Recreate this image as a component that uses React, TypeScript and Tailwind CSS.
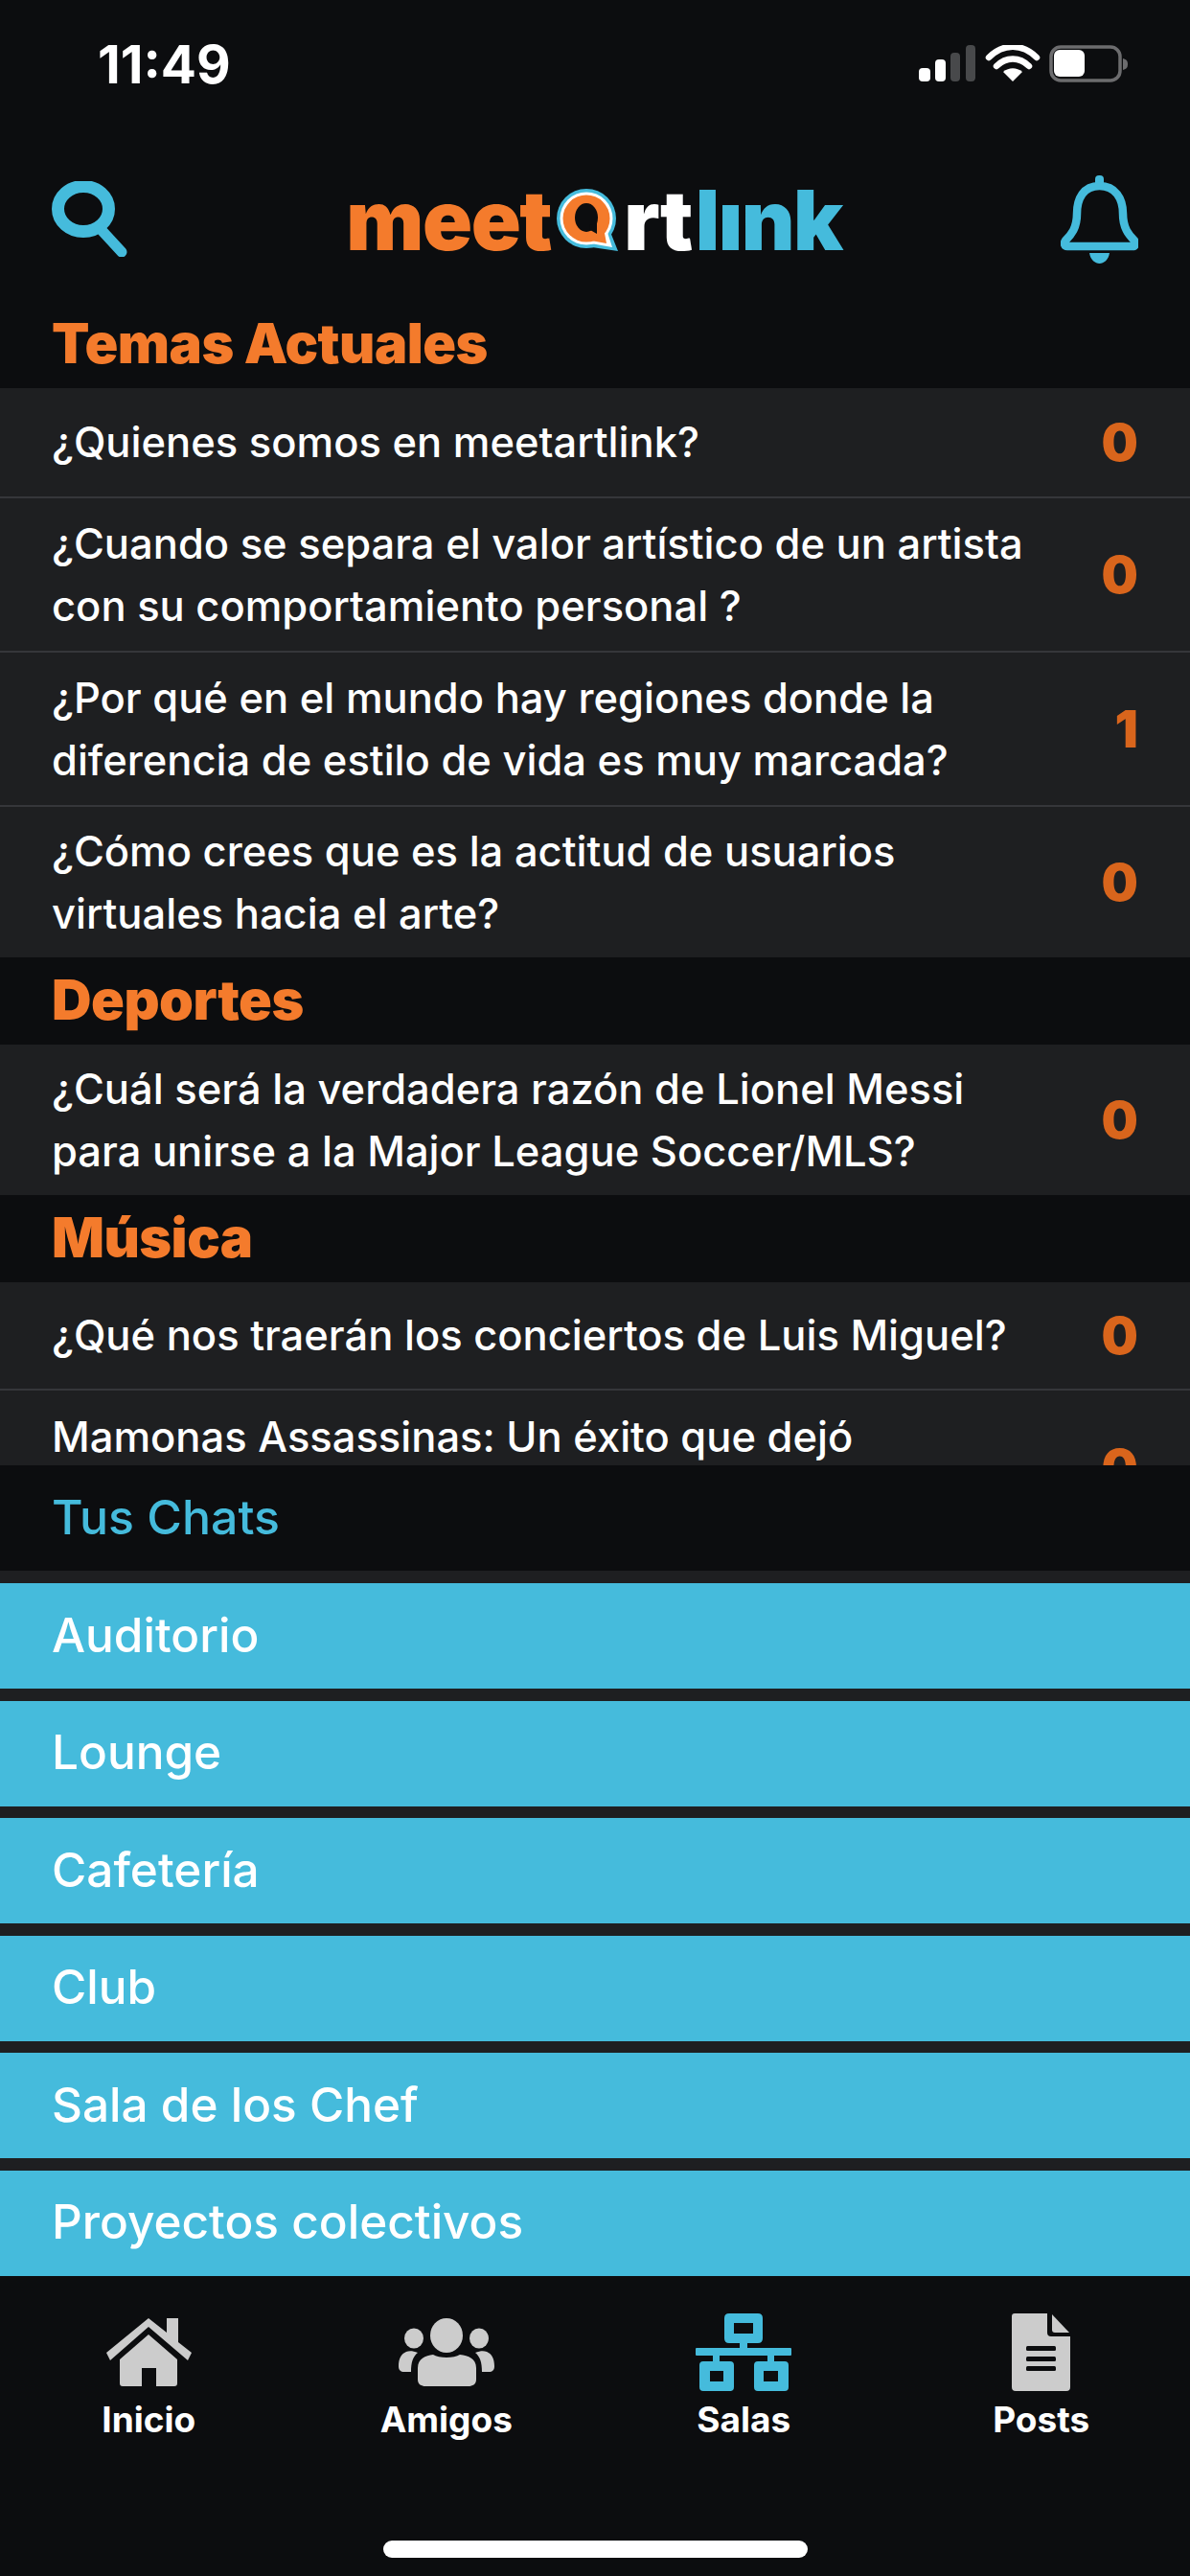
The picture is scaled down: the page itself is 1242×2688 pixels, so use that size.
import React from 'react'

const temas = [
  { lines: ['¿Quienes somos en meetartlink?'], count: 0, height: 'h-[115px]' },
  { lines: ['¿Cuando se separa el valor artístico de un artista', 'con su comportamiento personal ?'], count: 0, height: 'h-[161px]' },
  { lines: ['¿Por qué en el mundo hay regiones donde la', 'diferencia de estilo de vida es muy marcada?'], count: 1, height: 'h-[161px]' },
  { lines: ['¿Cómo crees que es la actitud de usuarios', 'virtuales hacia el arte?'], count: 0, height: 'h-[157px]', last: true },
]
const deportes = [
  { lines: ['¿Cuál será la verdadera razón de Lionel Messi', 'para unirse a la Major League Soccer/MLS?'], count: 0, height: 'h-[157px]', last: true },
]
const chats = ['Auditorio', 'Lounge', 'Cafetería', 'Club', 'Sala de los Chef', 'Proyectos colectivos']

function StatusIcons() {
  return (
    <svg width="218" height="39" viewBox="0 0 218 39">
      <rect x="0" y="24" width="12" height="14" rx="4" fill="#fff" />
      <rect x="17" y="15" width="11" height="23" rx="4" fill="#fff" />
      <rect x="33" y="8" width="10" height="30" rx="4" fill="#48494b" />
      <rect x="49" y="0" width="10" height="38" rx="4" fill="#48494b" />
      <path d="M73 13 C88 -2 108 -2 123 13 M81 22 C91 12 105 12 115 22" fill="none" stroke="#fff" strokeWidth="6.5" strokeLinecap="round" />
      <path d="M88 28 C94 23 102 23 108 28 L98 38 Z" fill="#fff" />
      <rect x="138" y="2" width="72" height="35" rx="10" fill="none" stroke="#6c6c6e" strokeWidth="3.5" />
      <rect x="141" y="5" width="32" height="28" rx="6" fill="#fff" />
      <path d="M213 14 C217 15 218 17 218 20 C218 23 217 25 213 26 Z" fill="#6c6c6e" />
    </svg>
  )
}

function SearchIcon() {
  return (
    <svg width="79" height="79" viewBox="0 0 79 79" fill="none">
      <ellipse cx="33" cy="29" rx="26.500" ry="23.500" stroke="#45bbdc" strokeWidth="13" />
      <path d="M50 49 L73 74" stroke="#45bbdc" strokeWidth="11" strokeLinecap="round" />
    </svg>
  )
}

function BellIcon() {
  return (
    <svg width="81" height="92" viewBox="0 0 81 92" fill="none">
      <rect x="36" y="0" width="9" height="14" rx="4" fill="#45bbdc" />
      <path d="M40.500 11 C24 11 17 24 17 40 C17 55 11 62 5 68 C3 71 4 74 7 74 H75 C78 74 79 71 77 68 C71 62 65 55 65 40 C65 24 57 11 40.500 11 Z" stroke="#45bbdc" strokeWidth="8.500" strokeLinejoin="round" />
      <path d="M30 81 H51 C50 88 45 92 40.500 92 C36 92 31 88 30 81 Z" fill="#45bbdc" />
    </svg>
  )
}

function LogoBubble() {
  const layer = (r: number, color: string, tail: string) => (
    <g fill={color}>
      <circle cx="31" cy="31" r={r} />
      <polygon points={tail} />
    </g>
  )
  return (
    <svg width="64" height="66" viewBox="0 0 64 66" className="mx-[6px] shrink-0">
      {layer(31, '#45bbdc', '36,40 50,30 64,65 30,60')}
      {layer(27.500, '#ffffff', '36,40 48,30 58,61 30,56')}
      {layer(24.500, '#f47b2c', '36,40 47,30 52,57 30,53')}
      <ellipse cx="31" cy="30" rx="12" ry="15" fill="#0c0d0f" />
      <polygon points="34,38 42,36 42,47 35,43" fill="#0c0d0f" />
    </svg>
  )
}

function Logo() {
  return (
    <div className="flex items-end h-[66px] font-['Inter',sans-serif] font-black text-[86px] leading-[66px] tracking-[-1.5px]">
      <span className="text-[#f47b2c]">meet</span>
      <LogoBubble />
      <span className="text-white">rt</span>
      <span className="text-[#45bbdc] ml-[4px]">lınk</span>
    </div>
  )
}

function HomeIcon() {
  return (
    <svg width="89" height="71" viewBox="0 0 89 71" fill="#cccccc">
      <polygon points="0,36 44,0 63,15 63,0 75,0 75,25 89,36 85,44 44,9 4,44" />
      <path d="M44 17 L74 43 V68 Q74 71 71 71 H52 V52 H37 V71 H17 Q14 71 14 68 V43 Z" />
    </svg>
  )
}

function FriendsIcon() {
  return (
    <svg width="100" height="71" viewBox="0 0 100 71" fill="#cccccc">
      <ellipse cx="50" cy="18" rx="17" ry="18" />
      <ellipse cx="16" cy="21" rx="10" ry="10.500" />
      <ellipse cx="84" cy="21" rx="10" ry="10.500" />
      <path d="M20 52 C20 42 28 39 36 38 C42 42 58 42 64 38 C73 39 81 42 81 52 V64 C81 69 77 71 73 71 H28 C24 71 20 69 20 64 Z" />
      <path d="M8 35 C11 34 15 34 20 36 C15 40 13 46 13 56 H6 C2 56 0 54 0 50 C0 42 3 37 8 35 Z" />
      <path d="M92 35 C89 34 85 34 80 36 C85 40 87 46 87 56 H94 C98 56 100 54 100 50 C100 42 97 37 92 35 Z" />
    </svg>
  )
}

function RoomsIcon() {
  return (
    <svg width="100" height="81" viewBox="0 0 100 81" fill="#45bbdc" fillRule="evenodd">
      <path d="M35 0 H65 Q70 0 70 5 V26 Q70 31 65 31 H35 Q30 31 30 26 V5 Q30 0 35 0 Z M40 10 V21 H60 V10 Z" />
      <rect x="46" y="31" width="8" height="6" />
      <rect x="0" y="36" width="100" height="8" rx="1" />
      <rect x="18" y="44" width="7" height="7" />
      <rect x="75" y="44" width="7" height="7" />
      <path d="M8 50 H36 Q40 50 40 54 V77 Q40 81 36 81 H8 Q4 81 4 77 V54 Q4 50 8 50 Z M15 60 V71 H29 V60 Z" />
      <path d="M65 50 H93 Q97 50 97 54 V77 Q97 81 93 81 H65 Q61 81 61 77 V54 Q61 50 65 50 Z M71 60 V71 H86 V60 Z" />
    </svg>
  )
}

function PostsIcon() {
  return (
    <svg width="61" height="81" viewBox="0 0 61 81" fill="#cccccc">
      <path d="M3 0 H37 V20 Q37 24 41 24 H61 V77 Q61 81 57 81 H4 Q0 81 0 77 V3 Q0 0 3 0 Z" />
      <path d="M42 1 L60 20 H45 Q42 20 42 17 Z" />
      <rect x="15" y="34" width="31" height="5" rx="1.500" fill="#0c0d0f" />
      <rect x="15" y="45" width="31" height="5" rx="1.500" fill="#0c0d0f" />
      <rect x="15" y="55" width="31" height="5" rx="1.500" fill="#0c0d0f" />
    </svg>
  )
}

function SectionTitle({ title }: { title: string }) {
  return (
    <h2 className="h-[91px] flex items-center px-[54px] pb-[2px] text-[57.500px] font-black text-[#f47b2c] tracking-[-0.5px]">
      {title}
    </h2>
  )
}

function TopicRow({ lines, count, height, last }: { lines: string[]; count: number; height: string; last?: boolean }) {
  return (
    <div className={`flex items-center justify-between bg-[#1e1f21] pl-[54px] pr-[54px] ${height} ${last ? '' : 'border-b-2 border-[#35363a]'}`}>
      <p className="text-[43.500px] leading-[65px] font-medium text-white whitespace-nowrap">
        {lines.map((l) => (
          <span className="block" key={l}>{l}</span>
        ))}
      </p>
      <span className="text-[54px] font-black text-[#d9651c]">{count}</span>
    </div>
  )
}

function NavItem({ label, icon }: { label: string; icon: React.ReactNode }) {
  return (
    <div className="flex flex-col items-center">
      <div className="h-[81px] flex items-center">{icon}</div>
      <span className="mt-[8px] text-[37px] leading-[44px] font-bold text-white">{label}</span>
    </div>
  )
}

export default function App() {
  return (
    <div className="w-[1242px] h-[2688px] bg-[#0c0d0f] flex flex-col overflow-hidden font-['Inter',sans-serif]">
      <div className="h-[130px] shrink-0 flex items-start justify-between pl-[102px] pr-[65px] pt-[47px]">
        <span className="text-[55px] leading-[40px] font-bold text-white">11:49</span>
        <StatusIcons />
      </div>

      <div className="h-[184px] shrink-0 flex items-start justify-between px-[54px] pt-[53px]">
        <div className="pt-[6px]"><SearchIcon /></div>
        <div className="pt-[14px]"><Logo /></div>
        <BellIcon />
      </div>

      <div className="h-[1215px] shrink-0 overflow-hidden">
        <SectionTitle title="Temas Actuales" />
        {temas.map((t) => <TopicRow key={t.lines[0]} {...t} />)}
        <SectionTitle title="Deportes" />
        {deportes.map((t) => <TopicRow key={t.lines[0]} {...t} />)}
        <SectionTitle title="Música" />
        <TopicRow lines={['¿Qué nos traerán los conciertos de Luis Miguel?']} count={0} height="h-[113px]" />
        <TopicRow lines={['Mamonas Assassinas: Un éxito que dejó', '\u00a0']} count={0} height="h-[163px]" />
      </div>

      <div className="h-[110px] shrink-0 flex items-center px-[54px] pb-[2px] text-[50px] font-medium text-[#45bbdc]">
        Tus Chats
      </div>

      <div className="h-[736px] shrink-0 bg-[#1e1f21] pt-[13px] flex flex-col gap-[12.500px] border-b-4 border-[#3a3b3d]">
        {chats.map((c) => (
          <div key={c} className="h-[110px] shrink-0 flex items-center px-[54px] pb-[2px] bg-[#45bbdc] text-[49.500px] font-medium text-white">
            {c}
          </div>
        ))}
      </div>

      <div className="grid grid-cols-4 pt-[39px]">
        <NavItem label="Inicio" icon={<HomeIcon />} />
        <NavItem label="Amigos" icon={<FriendsIcon />} />
        <NavItem label="Salas" icon={<RoomsIcon />} />
        <NavItem label="Posts" icon={<PostsIcon />} />
      </div>

      <div className="mt-[104px] mx-auto w-[443px] h-[18px] rounded-full bg-white" />
    </div>
  )
}
